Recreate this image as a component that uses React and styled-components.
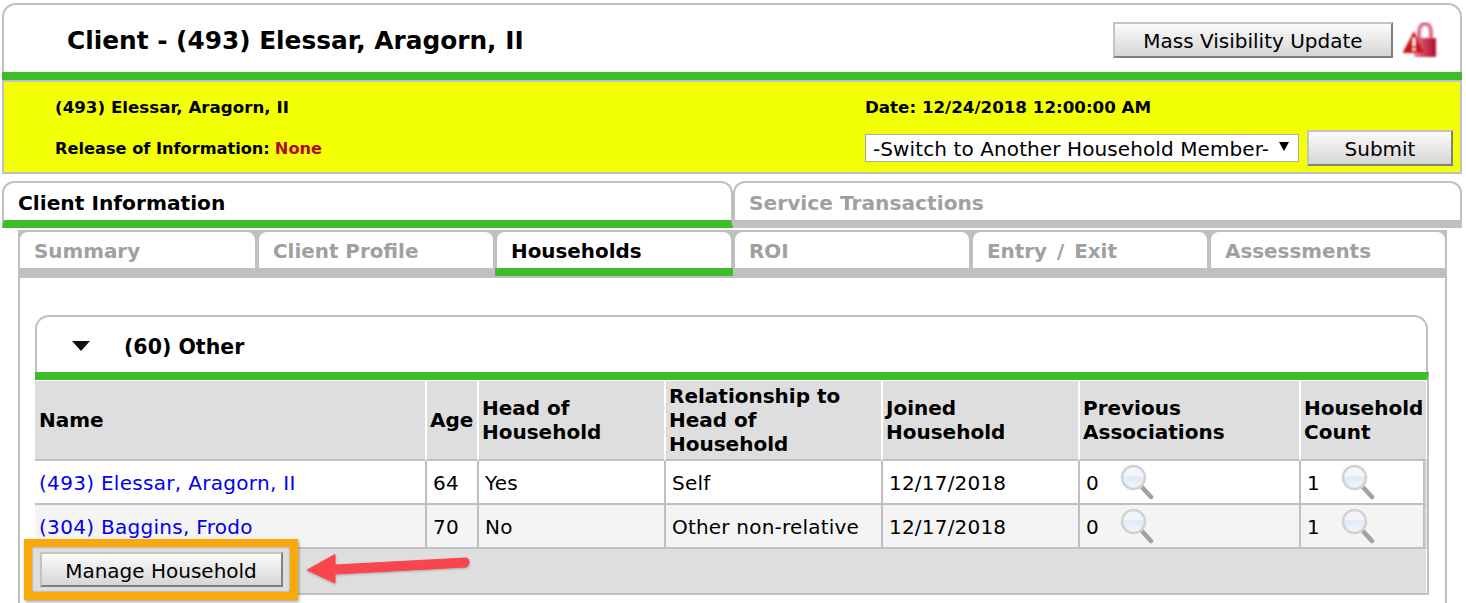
import React from 'react';
import styled, { createGlobalStyle } from 'styled-components';

const GlobalStyle = createGlobalStyle`
  html, body {
    margin: 0;
    height: 603px;
    overflow: hidden;
    background: #fff;
    font-family: "DejaVu Sans", Verdana, sans-serif;
    color: #000;
  }
`;

const Page = styled.div`
  position: relative;
  width: 1466px;
  height: 603px;
  overflow: hidden;
  padding: 3px 4px 0 2px;
  box-sizing: border-box;
`;

const HeaderCard = styled.div`
  height: 69px;
  box-sizing: border-box;
  border: 2px solid #c0c0c0;
  border-bottom: 0;
  border-radius: 14px 14px 0 0;
  display: flex;
  align-items: center;
  padding: 3px 22px 0 63px;
`;

const Title = styled.h1`
  flex: 1;
  margin: 0;
  font-size: 24.8px;
  font-weight: 700;
`;

const Button = styled.button`
  font-family: inherit;
  font-size: 20px;
  color: #000;
  width: ${(p) => p.$width}px;
  height: ${(p) => p.$height || 36}px;
  padding: 2px 0 0;
  box-sizing: border-box;
  border: 2px solid;
  border-color: #c4c4c4 #808080 #808080 #c4c4c4;
  background: linear-gradient(#fbfbfb, #d6d6d6);
`;

const HeaderActions = styled.div`
  display: flex;
  align-items: center;
  gap: 9px;
`;

const GreenBar = styled.div`
  height: 8px;
  background: #3dbd2a;
`;

const InfoBar = styled.div`
  height: 94px;
  box-sizing: border-box;
  background: #f2ff05;
  border: 2px solid #c0c0c0;
  display: grid;
  grid-template-columns: 810px 1fr;
  grid-template-rows: 46px 40px;
  padding: 0 7px 0 51px;
  font-weight: 700;
`;

const InfoCell = styled.div`
  display: flex;
  align-items: center;
  font-size: ${(p) => (p.$low ? 16.2 : 16.7)}px;
  padding-top: ${(p) => (p.$low ? 0 : 4)}px;
`;

const Red = styled.span`
  color: #b30a26;
  margin-left: 5px;
`;

const SwitchRow = styled.div`
  display: flex;
  align-items: center;
  gap: 8px;
`;

const FakeSelect = styled.div`
  width: 434px;
  height: 28px;
  box-sizing: border-box;
  background: #fff;
  border: 1px solid #a9a9a9;
  display: flex;
  align-items: center;
  justify-content: space-between;
  padding: 1px 9px 0 7px;
  font-size: 20px;
  letter-spacing: 0.1px;
  font-weight: 400;
  white-space: nowrap;
`;

const SelectArrow = styled.span`
  width: 0;
  height: 0;
  border-left: 5px solid transparent;
  border-right: 5px solid transparent;
  border-top: 9px solid #000;
  margin-bottom: 4px;
`;

const MainTabs = styled.div`
  display: grid;
  grid-template-columns: 731px 729px;
  margin-top: 7px;
`;

const MainTab = styled.div`
  height: 47px;
  box-sizing: border-box;
  border: 2px solid #c0c0c0;
  border-bottom: 8px solid ${(p) => (p.$active ? '#3dbd2a' : '#c0c0c0')};
  border-radius: 12px 12px 0 0;
  padding: 8px 0 0 14px;
  font-size: 20.2px;
  font-weight: 700;
  color: ${(p) => (p.$active ? '#000' : '#a0a0a0')};
`;

const Panel = styled.div`
  margin: 2px 15px 0 16px;
  height: 400px;
  box-sizing: border-box;
  border-left: 2px solid #c0c0c0;
  border-right: 2px solid #c0c0c0;
`;

const SubTabs = styled.div`
  display: grid;
  grid-template-columns: 239px 238px 238px 238px 238px 1fr;
  background: #c0c0c0;
  height: 48px;
  margin: 0 -2px;
`;

const SubTab = styled.div`
  height: 38px;
  box-sizing: border-box;
  background: #fff;
  border: 2px solid #c0c0c0;
  border-bottom: 0;
  border-radius: 10px 10px 0 0;
  padding: 8px 0 0 14px;
  font-size: 19.9px;
  font-weight: 700;
  word-spacing: ${(p) => (p.$spaced ? 3 : 0)}px;
  color: ${(p) => (p.$active ? '#000' : '#a0a0a0')};
  ${(p) => p.$active && 'box-shadow: 0 8px 0 #3dbd2a;'}
`;

const Group = styled.div`
  margin: 37px 17px 0 15px;
`;

const GroupHead = styled.div`
  height: 57px;
  box-sizing: border-box;
  border: 2px solid #c0c0c0;
  border-bottom: 0;
  border-radius: 14px 14px 0 0;
  display: flex;
  align-items: center;
  padding: 2px 0 0 35px;
  font-size: 20.5px;
  font-weight: 700;
`;

const GroupLabel = styled.span`
  padding-top: 3px;
`;

const Caret = styled.span`
  width: 0;
  height: 0;
  border-left: 9px solid transparent;
  border-right: 9px solid transparent;
  border-top: 10px solid #111;
  margin-right: 34px;
`;

const Table = styled.table`
  table-layout: fixed;
  width: 1394px;
  border-collapse: separate;
  border-spacing: 0;
  background: #dedede;
  border-top: 8px solid #3dbd2a;
  border-bottom: 2px solid #c0c0c0;
  border-right: 2px solid #c0c0c0;
  box-sizing: border-box;
`;

const Th = styled.th`
  height: 81px;
  box-sizing: border-box;
  padding: 0 0 0 ${(p) => (p.$first ? 4 : 3)}px;
  background: #dedede;
  border-left: ${(p) => (p.$first ? 0 : '2px solid #fff')};
  border-top: 1px solid #fff;
  border-bottom: 2px solid #c0c0c0;
  ${(p) => p.$last && 'border-right: 1px solid #fff;'}
  font-size: 20px;
  line-height: 24px;
  text-align: left;
  font-weight: 700;
`;

const Td = styled.td`
  height: 44px;
  box-sizing: border-box;
  padding: 2px 0 0 6px;
  border-left: ${(p) => (p.$first ? 0 : '2px solid #c0c0c0')};
  border-bottom: 2px solid #c0c0c0;
  ${(p) => p.$last && 'border-right: 2px solid #dedede; box-shadow: inset -2px 0 0 #c0c0c0;'}
  background: ${(p) => (p.$odd ? '#fff' : '#f4f4f4')};
  font-size: 20px;
  letter-spacing: 0.2px;
  white-space: nowrap;
`;

const NameLink = styled.a`
  color: #0000ee;
  margin-left: -2px;
  letter-spacing: 0.3px;
  text-decoration: none;
`;

const CountCell = styled.div`
  display: flex;
  align-items: center;
  gap: 21px;
  svg {
    margin-top: -2px;
  }
`;

const FooterCell = styled.td`
  height: 42px;
  background: #dedede;
  border-right: 1px solid #fff;
`;

const Highlight = styled.div`
  position: absolute;
  left: 24px;
  top: 539px;
  width: 274px;
  height: 61px;
  box-sizing: border-box;
  border: 8px solid #f9a90a;
  box-shadow: 1px 2px 3px rgba(0, 0, 0, 0.35), inset 0 0 2px rgba(0, 0, 0, 0.5);
  display: flex;
  align-items: center;
  justify-content: center;
  background: #dedede;
`;

const Arrow = styled.svg`
  position: absolute;
  left: 300px;
  top: 550px;
  filter: drop-shadow(0 1px 1px rgba(0, 0, 0, 0.25));
`;

const LockIcon = () => (
  <svg width="36" height="36" viewBox="0 0 36 36">
    <defs>
      <linearGradient id="lockBody" x1="0" y1="0" x2="1" y2="0">
        <stop offset="0" stopColor="#e8899c" />
        <stop offset="0.45" stopColor="#d0405c" />
        <stop offset="1" stopColor="#ad0f2e" />
      </linearGradient>
      <filter id="soft">
        <feGaussianBlur stdDeviation="0.8" />
      </filter>
    </defs>
    <g filter="url(#soft)">
      <path d="M17 18V10c0-11 12-11 12 0v8" fill="none" stroke="#dc7088" strokeWidth="4" />
      <rect x="12" y="16" width="22" height="19" rx="1" fill="url(#lockBody)" />
      <path d="M0.5 31 12 9l10 22z" fill="#cc1818" />
      <rect x="10.7" y="16" width="2.6" height="8" fill="#fff" />
      <rect x="10.7" y="26" width="2.6" height="2.6" fill="#fff" />
    </g>
  </svg>
);

const Magnifier = ({ id }) => (
  <svg width="34" height="36" viewBox="0 0 34 36">
    <defs>
      <linearGradient id={id} x1="0" y1="0" x2="0" y2="1">
        <stop offset="0" stopColor="#f7f9fc" />
        <stop offset="0.42" stopColor="#f0f5fb" />
        <stop offset="0.48" stopColor="#dfeaf7" />
        <stop offset="1" stopColor="#f2f7fc" />
      </linearGradient>
    </defs>
    <path d="M21 22l10 11" stroke="#a2a2a2" strokeWidth="4.5" strokeLinecap="round" />
    <path d="M19 20l3 3" stroke="#d6d6d6" strokeWidth="3" />
    <circle cx="13.5" cy="13.5" r="11.5" fill={`url(#${id})`} stroke="#d2d2d2" strokeWidth="2.5" />
  </svg>
);

const rows = [
  { name: '(493) Elessar, Aragorn, II', age: 64, head: 'Yes', rel: 'Self', joined: '12/17/2018' },
  { name: '(304) Baggins, Frodo', age: 70, head: 'No', rel: 'Other non-relative', joined: '12/17/2018' },
];

const App = () => (
  <Page>
    <GlobalStyle />
    <HeaderCard>
      <Title>Client - (493) Elessar, Aragorn, II</Title>
      <HeaderActions>
        <Button $width={280}>Mass Visibility Update</Button>
        <LockIcon />
      </HeaderActions>
    </HeaderCard>
    <GreenBar />
    <InfoBar>
      <InfoCell>(493) Elessar, Aragorn, II</InfoCell>
      <InfoCell>Date: 12/24/2018 12:00:00 AM</InfoCell>
      <InfoCell $low>
        Release of Information:<Red>None</Red>
      </InfoCell>
      <SwitchRow>
        <FakeSelect>
          -Switch to Another Household Member-
          <SelectArrow />
        </FakeSelect>
        <Button $width={146}>Submit</Button>
      </SwitchRow>
    </InfoBar>
    <MainTabs>
      <MainTab $active>Client Information</MainTab>
      <MainTab>Service Transactions</MainTab>
    </MainTabs>
    <Panel>
      <SubTabs>
        <SubTab>Summary</SubTab>
        <SubTab>Client Profile</SubTab>
        <SubTab $active>Households</SubTab>
        <SubTab>ROI</SubTab>
        <SubTab $spaced>Entry / Exit</SubTab>
        <SubTab>Assessments</SubTab>
      </SubTabs>
      <Group>
        <GroupHead>
          <Caret />
          <GroupLabel>(60) Other</GroupLabel>
        </GroupHead>
        <Table>
          <colgroup>
            <col style={{ width: 390 }} />
            <col style={{ width: 52 }} />
            <col style={{ width: 187 }} />
            <col style={{ width: 217 }} />
            <col style={{ width: 197 }} />
            <col style={{ width: 221 }} />
            <col />
          </colgroup>
          <thead>
            <tr>
              <Th $first>Name</Th>
              <Th>Age</Th>
              <Th>Head of Household</Th>
              <Th>Relationship to Head of Household</Th>
              <Th>Joined Household</Th>
              <Th>Previous Associations</Th>
              <Th $last>Household Count</Th>
            </tr>
          </thead>
          <tbody>
            {rows.map((row, i) => (
              <tr key={row.name}>
                <Td $first $odd={i === 0}>
                  <NameLink href="#">{row.name}</NameLink>
                </Td>
                <Td $odd={i === 0}>{row.age}</Td>
                <Td $odd={i === 0}>{row.head}</Td>
                <Td $odd={i === 0}>{row.rel}</Td>
                <Td $odd={i === 0}>{row.joined}</Td>
                <Td $odd={i === 0}>
                  <CountCell>
                    0 <Magnifier id={`prev${i}`} />
                  </CountCell>
                </Td>
                <Td $odd={i === 0} $last>
                  <CountCell>
                    1 <Magnifier id={`count${i}`} />
                  </CountCell>
                </Td>
              </tr>
            ))}
            <tr>
              <FooterCell colSpan={7} />
            </tr>
          </tbody>
        </Table>
      </Group>
    </Panel>
    <Highlight>
      <Button $width={243} $height={35}>Manage Household</Button>
    </Highlight>
    <Arrow width="175" height="40" viewBox="0 0 175 40">
      <path d="M7 20 35 4.5v10.5l131-7c4 0 4 8 0 9L35 24v9z" fill="#f9454b" stroke="#f9454b" strokeWidth="1" strokeLinejoin="round" />
    </Arrow>
  </Page>
);

export default App;
